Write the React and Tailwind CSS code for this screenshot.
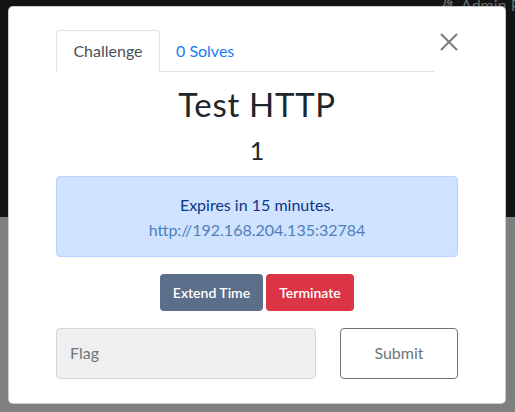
import { Wrench } from 'lucide-react'

function CloseIcon() {
  return (
    <svg width="18" height="18" viewBox="0 0 18 18" fill="none">
      <path d="M1 1L17 17M17 1L1 17" stroke="#7b7b7b" strokeWidth="2" />
    </svg>
  )
}

export default function App() {
  return (
    <div className="relative w-[515px] h-[412px] overflow-hidden font-['Lato',_'Liberation_Sans',_sans-serif]">
      {/* dimmed page behind the modal */}
      <div className="flex flex-col h-full">
        <div className="relative h-[217px] bg-[#121314]">
          <div className="absolute top-[-3px] left-[439px] flex items-center gap-[8px] text-[16px] leading-none text-[#6a6a6a] whitespace-nowrap">
            <Wrench size={14} strokeWidth={2.5} />
            <span>Admin Panel</span>
          </div>
        </div>
        <div className="flex-1 bg-[#7f7f7f]" />
      </div>

      {/* modal */}
      <div className="absolute left-[8px] top-[6px] w-[498px] h-[398px] bg-white rounded-[5px] border border-black/20 px-[47px] pt-[23px]">
        <div className="flex">
          <ul className="flex flex-1 border-b border-[#dee2e6] h-[42px]">
            <li className="h-[42px] w-[104px] flex items-center justify-center border border-[#dee2e6] border-b-white rounded-t-[4px] bg-white text-[16px] text-[#495057]">
              Challenge
            </li>
            <li className="h-[41px] px-[16px] flex items-center text-[16px] text-[#1a7cf5]">0 Solves</li>
          </ul>
          <button className="w-[24px] flex justify-end pt-[3px]">
            <CloseIcon />
          </button>
        </div>

        <h2 className="mt-[13px] text-center text-[33px] leading-[1.2] text-[#212529] tracking-[0.7px]">Test HTTP</h2>
        <h3 className="mt-[10px] text-center text-[25px] leading-[1.2] text-[#212529]">1</h3>

        <div className="mt-[11px] h-[81px] pt-[2px] border border-[#b8d4fb] bg-[#cfe2ff] rounded-[4px] flex flex-col items-center justify-center text-[16px] leading-[25px]">
          <span className="text-[#0b3686]">Expires in 15 minutes.</span>
          <a className="text-[#4f7fba]">http://192.168.204.135:32784</a>
        </div>

        <div className="mt-[17px] flex justify-center gap-[3px]">
          <button className="h-[37px] w-[103px] rounded-[4px] bg-[#5b6f8b] text-white text-[14px] font-semibold">Extend Time</button>
          <button className="h-[37px] w-[88px] rounded-[4px] bg-[#dc3545] text-white text-[14px] font-semibold">Terminate</button>
        </div>

        <div className="mt-[17px] flex justify-between">
          <div className="w-[260px] h-[51px] bg-[#efefef] border border-[#d3d7db] rounded-[4px] flex items-center px-[13px] text-[16px] text-[#6c757d]">
            Flag
          </div>
          <button className="w-[118px] h-[51px] border border-[#6c757d] rounded-[4px] bg-white text-[16px] text-[#6c757d]">Submit</button>
        </div>
      </div>
    </div>
  )
}
